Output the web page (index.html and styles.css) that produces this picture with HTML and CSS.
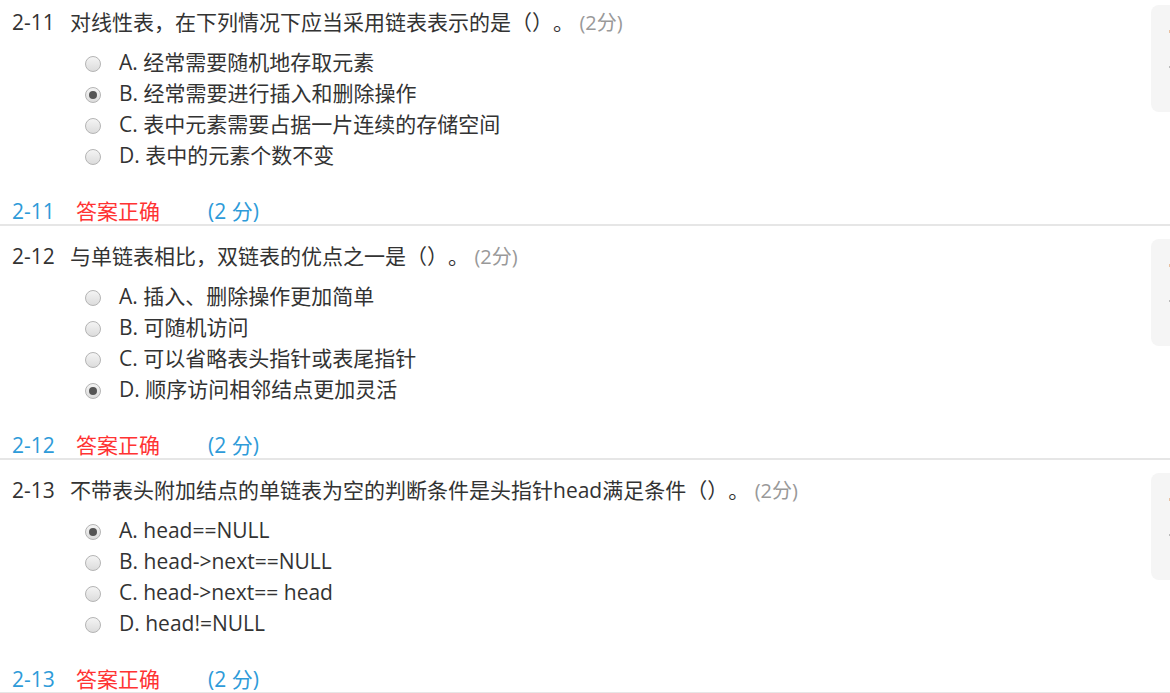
FILE: index.html
```html
<!DOCTYPE html>
<html lang="zh-CN">
<head>
  <meta charset="UTF-8">
  <title>单选题</title>
  <link rel="stylesheet" href="styles.css">
</head>
<body>
  <div class="page">

    <div class="problem">
      <div class="question">
        <div class="q-main">
          <div class="q-title"><span class="q-num">2-11</span>对线性表，在下列情况下应当采用链表表示的是（）。 <span class="q-score">(2分)</span></div>
          <ul class="options">
            <li><span class="radio"></span>A. 经常需要随机地存取元素</li>
            <li><span class="radio checked"></span>B. 经常需要进行插入和删除操作</li>
            <li><span class="radio"></span>C. 表中元素需要占据一片连续的存储空间</li>
            <li><span class="radio"></span>D. 表中的元素个数不变</li>
          </ul>
        </div>
        <div class="side"><i class="mark orange"></i><i class="mark gray"></i></div>
      </div>
      <div class="answer"><span class="a-num">2-11</span><span class="a-status">答案正确</span><span class="a-score">(2 分)</span></div>
    </div>

    <div class="problem">
      <div class="question">
        <div class="q-main">
          <div class="q-title"><span class="q-num">2-12</span>与单链表相比，双链表的优点之一是（）。 <span class="q-score">(2分)</span></div>
          <ul class="options">
            <li><span class="radio"></span>A. 插入、删除操作更加简单</li>
            <li><span class="radio"></span>B. 可随机访问</li>
            <li><span class="radio"></span>C. 可以省略表头指针或表尾指针</li>
            <li><span class="radio checked"></span>D. 顺序访问相邻结点更加灵活</li>
          </ul>
        </div>
        <div class="side"><i class="mark orange"></i><i class="mark gray"></i></div>
      </div>
      <div class="answer"><span class="a-num">2-12</span><span class="a-status">答案正确</span><span class="a-score">(2 分)</span></div>
    </div>

    <div class="problem">
      <div class="question">
        <div class="q-main">
          <div class="q-title"><span class="q-num">2-13</span>不带表头附加结点的单链表为空的判断条件是头指针head满足条件（）。 <span class="q-score">(2分)</span></div>
          <ul class="options">
            <li><span class="radio checked"></span>A. head==NULL</li>
            <li><span class="radio"></span>B. head-&gt;next==NULL</li>
            <li><span class="radio"></span>C. head-&gt;next== head</li>
            <li><span class="radio"></span>D. head!=NULL</li>
          </ul>
        </div>
        <div class="side"><i class="mark orange"></i><i class="mark gray"></i></div>
      </div>
      <div class="answer"><span class="a-num">2-13</span><span class="a-status">答案正确</span><span class="a-score">(2 分)</span></div>
    </div>

  </div>
</body>
</html>
```

FILE: styles.css
```css
html, body { margin: 0; padding: 0; background: #fff; overflow: hidden; }
body {
  font-family: "Open Sans", "Noto Sans CJK SC", sans-serif;
  font-size: 21px;
  color: #333;
  text-spacing-trim: space-all;
}
.page { margin-top: -7px; }

.problem { border-bottom: 2px solid #e6e6e6; margin-bottom: 1px; }
.question { display: flex; align-items: flex-start; }
.q-main { flex: 1; padding: 16px 0 0 12px; }
.q-title { height: 26px; line-height: 26px; white-space: nowrap; }
.q-num { display: inline-block; width: 58px; }
.q-score { color: #999; font-size: 20px; }

.options { list-style: none; margin: 12px 0 0; padding: 0 0 0 73px; }
.options li { display: flex; align-items: center; height: 31px; line-height: 31px; }
.radio {
  width: 14px; height: 14px;
  border: 1px solid #b4b4b4;
  border-radius: 50%;
  background: linear-gradient(#f4f4f4, #dcdcdc);
  margin-right: 18px;
  position: relative;
  top: 1px;
  flex: none;
}
.radio.checked::after {
  content: "";
  position: absolute;
  left: 3px; top: 3px;
  width: 8px; height: 8px;
  border-radius: 50%;
  background: #555;
}

.side {
  width: 19px; height: 107px;
  margin-top: 12px;
  background: #f5f5f5;
  border-radius: 8px 0 0 8px;
  position: relative;
}
.mark { position: absolute; right: 0; width: 1px; height: 3px; }
.mark.orange { top: 25px; background: #e9c0a0; }
.mark.gray { top: 61px; background: #bbb; height: 2px; }

.answer { padding: 27px 0 0 12px; height: 26px; line-height: 26px; }
.a-num { display: inline-block; width: 64px; color: #2e9bd9; }
.a-status { display: inline-block; width: 132px; color: #ff3333; }
.a-score { color: #2e9bd9; }
```
